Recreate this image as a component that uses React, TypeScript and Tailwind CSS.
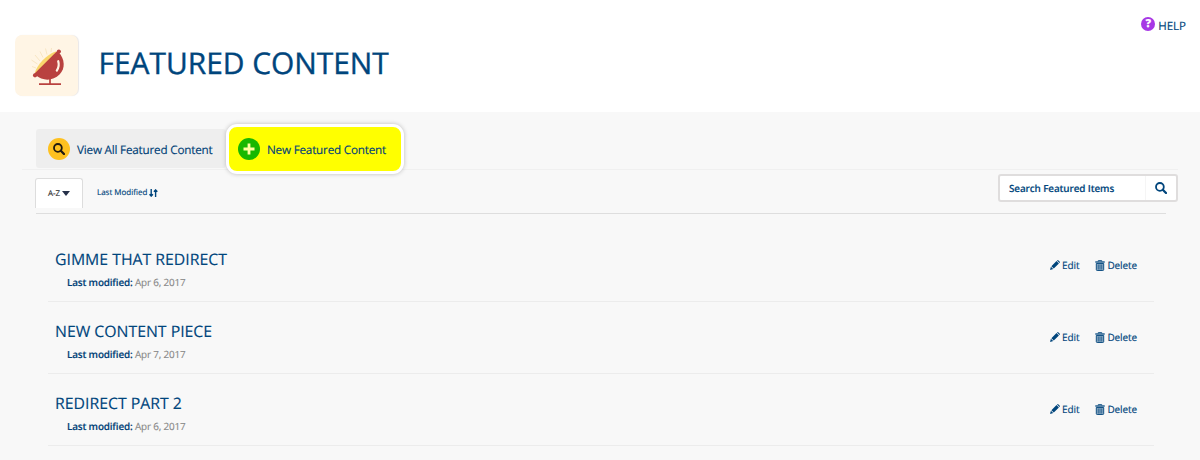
import React from 'react';

type FeaturedItem = {
    id: number;
    title: string;
    modified: string;
}

const items: FeaturedItem[] = [
    { id: 1, title: 'GIMME THAT REDIRECT', modified: 'Apr 6, 2017' },
    { id: 2, title: 'NEW CONTENT PIECE', modified: 'Apr 7, 2017' },
    { id: 3, title: 'REDIRECT PART 2', modified: 'Apr 6, 2017' },
];

const SpotlightLogo = () => (
    <svg className="block h-[61px] w-16" viewBox="0 0 64 61" fill="none">
        <path d="M17 31.5l4 1.5M16.5 25l6 4M20 20l5 6M25 16.5l3 6M30.5 13.5l1.5 6M36.5 13l-.5 4" stroke="#f8e6c4" strokeWidth="1" />
        <path d="M19.8 38C22 30 31 20 40.5 16.6L43 18 21 40Z" fill="#f9d56c" />
        <path d="M20.5 40L43.5 17C50 24 50.5 33.5 44.5 39.5C38 46 28 46.5 20.5 40Z" fill="#b9413f" />
        <path d="M20 40.5L43.8 16.7" stroke="#b9413f" strokeWidth="3.2" strokeLinecap="round" />
        <circle cx="20" cy="40.2" r="2" fill="#b9413f" />
        <circle cx="43.9" cy="16.6" r="2" fill="#b9413f" />
        <path d="M43.2 26.2c1 3.2.4 6.6-1.4 9.4" stroke="#fff5e5" strokeWidth="2.2" strokeLinecap="round" />
        <path d="M35 43v6M24 49.2h22" stroke="#b9413f" strokeWidth="1.7" />
    </svg>
);

const SearchIcon = ({ className }: { className: string }) => (
    <svg className={className} viewBox="0 0 12 12" fill="none" stroke="currentColor">
        <circle cx="4.9" cy="4.9" r="3.9" strokeWidth="1.8" />
        <path d="M7.8 7.8l3.2 3.2" strokeWidth="2.3" strokeLinecap="round" />
    </svg>
);

const PencilIcon = () => (
    <svg className="h-[10px] w-[10px]" viewBox="0 0 10 10" fill="currentColor">
        <path d="M0 10l.9-3.2 2.3 2.3zM1.4 6.2L6.5 1.1l2.4 2.4-5.1 5.1zM7 .6l.4-.4q.4-.4.8 0l1.6 1.6q.4.4 0 .8L9.4 3z" />
    </svg>
);

const TrashIcon = () => (
    <svg className="h-[11px] w-[10px]" viewBox="0 0 10 11" fill="none" stroke="currentColor">
        <path d="M3.3 1.4V.5h3.4v.9" strokeWidth=".8" />
        <path d="M.3 2h9.4" strokeWidth="1.3" />
        <path d="M1.3 3.5h7.4v6.1q0 .9-.9.9H2.2q-.9 0-.9-.9z" fill="currentColor" fillOpacity=".45" strokeWidth=".9" />
        <path d="M3.3 4.5v5M5 4.5v5M6.7 4.5v5" strokeWidth=".6" />
    </svg>
);

const SortIcon = () => (
    <svg className="h-2 w-[9px]" viewBox="0 0 9 8" fill="none" stroke="currentColor" strokeWidth="1.4">
        <path d="M2.2 0v7M.5 5.3l1.7 1.8 1.7-1.8M6.6 8V1M4.9 2.7L6.6.9l1.7 1.8" />
    </svg>
);

const ItemRow = ({ item }: { item: FeaturedItem }) => (
    <li className="flex h-[72px] items-start justify-between border-b border-[#ececec] pl-[7px] pr-[17px]">
        <div className="pt-[17px]">
            <h2 className="text-[15.8px] leading-[25px]">{item.title}</h2>
            <p className="mt-[3px] pl-3 text-[9.9px] leading-[14px] tracking-[-0.15px] text-[#888]">
                <strong className="font-semibold text-[#003f76]">Last modified:</strong> {item.modified}
            </p>
        </div>
        <div className="flex items-center gap-4 pt-7 text-[10px] leading-[14px] tracking-[-0.1px]">
            <a className="flex items-center gap-[2px]"><PencilIcon />Edit</a>
            <a className="flex items-center gap-[2px]"><TrashIcon />Delete</a>
        </div>
    </li>
);

export default function App() {
    return (
        <div className="h-[460px] overflow-hidden bg-[#f8f8f8] font-['Open_Sans','Liberation_Sans',sans-serif] text-[#00457c] [-webkit-text-stroke:0.15px] [text-rendering:geometricPrecision]">
            {/* Header */}
            <header className="flex h-28 items-start justify-between bg-white pl-[15px] pr-[14px]">
                <div className="flex items-start pt-[35px]">
                    <div className="h-[61px] w-[63px] overflow-hidden rounded-[7px] bg-[#fff5e5] shadow-[1px_0_1px_#e9e7e8]">
                        <SpotlightLogo />
                    </div>
                    <h1 className="ml-[20.5px] mt-2 text-[29.9px] leading-[40px] [-webkit-text-stroke:0.4px]">FEATURED CONTENT</h1>
                </div>
                <a className="flex items-center gap-[3px] pt-[18px] text-[11.5px] leading-[17px]">
                    <span className="-mt-[6px] flex h-[14px] w-[14px] items-center justify-center rounded-full bg-[#a737e5] text-[11px] font-extrabold leading-none text-white">?</span>
                    HELP
                </a>
            </header>

            {/* Actions */}
            <nav className="ml-[22px] mr-[22px] flex h-[58px] items-start border-b border-[#f0f0f0] pl-[14px]">
                <a className="mt-[17px] flex h-[39px] w-[190px] items-center rounded-[3px] bg-[#eee] pl-3 text-[11.7px] tracking-[-0.2px] text-[#003f76]">
                    <span className="mr-[7px] mt-px flex h-[22px] w-[22px] items-center justify-center rounded-full bg-[#fec120]">
                        <SearchIcon className="h-3 w-3 text-[#211b10]" />
                    </span>
                    <span className="pt-[5px]">View All Featured Content</span>
                </a>
                <a className="relative mt-3 flex h-[50px] w-[178px] shrink-0 items-center rounded-[11px] border-[3px] border-white bg-[#ff0] pl-[9px] text-[11.7px] tracking-[-0.2px] text-[#00427a] shadow-[0_0_4px_#bbb]">
                    <span className="mr-[7px] flex h-[22px] w-[22px] items-center justify-center rounded-full bg-[#18b800]">
                        <svg className="h-3 w-3" viewBox="0 0 12 12" stroke="#ffff9e" strokeWidth="2.8">
                            <path d="M6 .5v11M.5 6h11" />
                        </svg>
                    </span>
                    <span className="pt-[3px]">New Featured Content</span>
                </a>
            </nav>

            {/* Sorting and search */}
            <div className="ml-9 mr-[34px] flex h-11 items-start border-b border-[#dedede] text-[8px]">
                <div className="-ml-px mt-2 flex h-[30px] w-[48px] items-center justify-center gap-[2px] rounded-t-[3px] border border-b-0 border-[#ddd] bg-white text-[#333]">
                    A-Z
                    <svg className="h-[5px] w-2" viewBox="0 0 8 5" fill="#26314a"><path d="M0 0h8L4 5z" /></svg>
                </div>
                <a className="ml-[14px] mt-[17px] flex items-center gap-[2px] leading-[12px]">Last Modified<SortIcon /></a>
                <div className="-mr-3 ml-auto mt-1 flex h-[28px] w-[180px] rounded-[3px] border-2 border-[#dfdddd] bg-white">
                    <span className="flex-1 pl-[9px] text-[9.9px] font-semibold leading-[25px] tracking-[-0.1px]">Search Featured Items</span>
                    <button className="flex w-[31px] items-center justify-center border-l border-[#f5f5f5]">
                        <SearchIcon className="h-3 w-3" />
                    </button>
                </div>
            </div>

            {/* Results */}
            <ul className="ml-12 mr-[46px] pt-4">
                {items.map((item) => <ItemRow key={item.id} item={item} />)}
            </ul>
        </div>
    );
}
